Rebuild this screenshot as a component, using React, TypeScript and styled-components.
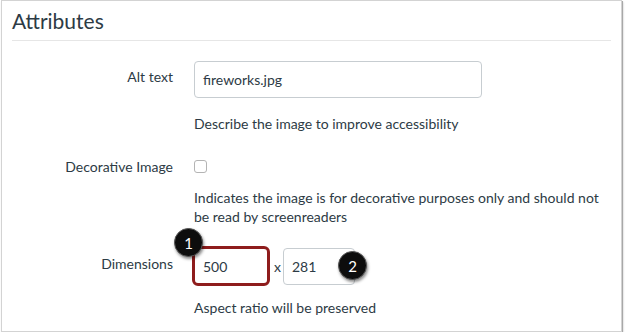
import React from "react";
import styled, { createGlobalStyle } from "styled-components";

const Global = createGlobalStyle`
  html, body { margin: 0; padding: 0; background: #ffffff; }
  body { font-family: Lato, "Open Sans", sans-serif; color: #2d3b45; }
  * { box-sizing: border-box; }
`;

const Frame = styled.section`
  margin-left: 1px;
  width: 621px;
  height: 332px;
  background: #fff;
  border: 1px solid #d3d3d3;
  box-shadow: 1px 1px 0 #a8a8a8, 1px 2px 2px rgba(0, 0, 0, 0.25);
  padding: 7px 10px 0 10px;
`;

const Heading = styled.h2`
  margin: 0;
  font-size: 21px;
  font-weight: 400;
  line-height: 26px;
  padding-bottom: 6px;
  border-bottom: 1px solid #e6e6e6;
  color: #2d3b45;
`;

const Rows = styled.div`
  display: flex;
  flex-direction: column;
  padding-top: 20px;
`;

const Row = styled.div<{ $gap?: number }>`
  display: grid;
  grid-template-columns: 161px 1fr;
  column-gap: 21px;
  margin-top: ${(p) => p.$gap ?? 0}px;
`;

const Label = styled.label<{ $top: number }>`
  text-align: right;
  font-size: 14px;
  line-height: 19px;
  padding-top: ${(p) => p.$top}px;
  color: #2d3b45;
`;

const Field = styled.div`
  display: flex;
  flex-direction: column;
  align-items: flex-start;
`;

const TextInput = styled.div<{ $width: number }>`
  width: ${(p) => p.$width}px;
  height: 37px;
  border: 1px solid #c7cdd1;
  border-radius: 4px;
  padding: 0 8px;
  display: flex;
  align-items: center;
  font-size: 14px;
  color: #2d3b45;
  background: #fff;
`;

const Hint = styled.div<{ $top: number }>`
  margin-top: ${(p) => p.$top}px;
  font-size: 14px;
  line-height: 19px;
  color: #2d3b45;
  max-width: 420px;
`;

const Checkbox = styled.span`
  display: block;
  margin-top: 3px;
  width: 13px;
  height: 13px;
  border: 1px solid #b4b4b4;
  border-radius: 3px;
  background: #fff;
`;

const Dims = styled.div`
  position: relative;
  display: flex;
  align-items: center;
  height: 40px;
`;

const SizeInput = styled.div<{ $highlight?: boolean }>`
  width: ${(p) => (p.$highlight ? 78 : 72)}px;
  height: ${(p) => (p.$highlight ? 40 : 37)}px;
  margin-left: ${(p) => (p.$highlight ? -2 : 0)}px;
  border: ${(p) => (p.$highlight ? "3px solid #8e1c1c" : "1px solid #c7cdd1")};
  border-radius: ${(p) => (p.$highlight ? 6 : 4)}px;
  padding: 0 8px;
  display: flex;
  align-items: center;
  font-size: 14px;
  color: #2d3b45;
  background: #fff;
`;

const Times = styled.span`
  font-size: 14px;
  padding: 0 2px 0 4px;
  color: #2d3b45;
`;

const Badge = styled.span<{ $x: number; $y: number }>`
  position: absolute;
  left: ${(p) => p.$x}px;
  top: ${(p) => p.$y}px;
  width: 29px;
  height: 29px;
  border-radius: 50%;
  background: #0d0d0d;
  color: #fff;
  font-size: 15px;
  display: flex;
  align-items: center;
  justify-content: center;
  box-shadow: 1px 2px 3px rgba(0, 0, 0, 0.45);
  border: 1px solid #555;
`;

export default function App() {
  return (
    <>
      <Global />
      <Frame>
        <Heading>Attributes</Heading>
        <Rows>
          <Row>
            <Label $top={6}>Alt text</Label>
            <Field>
              <TextInput $width={288}>fireworks.jpg</TextInput>
              <Hint $top={16}>Describe the image to improve accessibility</Hint>
            </Field>
          </Row>
          <Row $gap={24}>
            <Label $top={0}>Decorative Image</Label>
            <Field>
              <Checkbox />
              <Hint $top={15}>
                Indicates the image is for decorative purposes only and should not be read by screenreaders
              </Hint>
            </Field>
          </Row>
          <Row $gap={20}>
            <Label $top={8}>Dimensions</Label>
            <Field>
              <Dims>
                <SizeInput $highlight>500</SizeInput>
                <Times>x</Times>
                <SizeInput>281</SizeInput>
                <Badge $x={-20} $y={-18}>1</Badge>
                <Badge $x={144} $y={5}>2</Badge>
              </Dims>
              <Hint $top={12}>Aspect ratio will be preserved</Hint>
            </Field>
          </Row>
        </Rows>
      </Frame>
    </>
  );
}
